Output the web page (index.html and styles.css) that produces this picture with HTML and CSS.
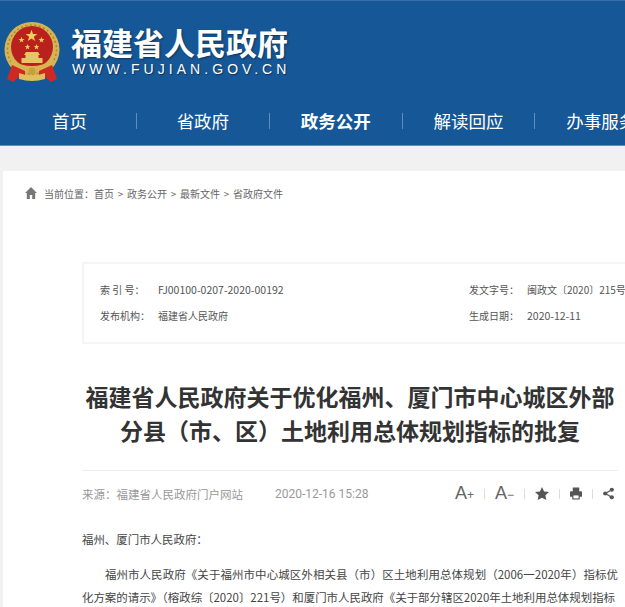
FILE: index.html

```html
<!DOCTYPE html>
<html lang="zh-CN">
<head>
  <meta charset="UTF-8" />
  <meta name="viewport" content="width=device-width, initial-scale=1.0" />
  <title>福建省人民政府关于优化福州、厦门市中心城区外部分县（市、区）土地利用总体规划指标的批复</title>
  <link rel="stylesheet" href="styles.css">
</head>
<body>
  <header class="site-header">
    <div class="brand">
      <svg class="emblem" width="56" height="61" viewBox="0 0 56 61">
        <defs>
          <polygon id="star" points="0,-1 0.24,-0.31 0.95,-0.31 0.38,0.12 0.59,0.81 0,0.4 -0.59,0.81 -0.38,0.12 -0.95,-0.31 -0.24,-0.31" fill="#f0cf58"/>
        </defs>
        <circle cx="28" cy="27.5" r="27.5" fill="#d6b456"/>
        <circle cx="28" cy="27.5" r="24.5" fill="none" stroke="#a98428" stroke-width="1.4" stroke-dasharray="2 2.5"/>
        <circle cx="28" cy="25" r="21" fill="#b8211c"/>
        <use href="#star" transform="translate(27.5 14) scale(6.2)"/>
        <use href="#star" transform="translate(17.5 18) scale(3.2)"/>
        <use href="#star" transform="translate(37.5 18) scale(3.2)"/>
        <use href="#star" transform="translate(23.5 25) scale(3)"/>
        <use href="#star" transform="translate(32.5 25) scale(3)"/>
        <path d="M22 30 H34 L36 33 H34.5 V36 H38.5 V41 H17.5 V36 H21.5 V33 H20 Z" fill="#e6c566"/>
        <path d="M7 38 Q28 50 49 38 L50 43 Q28 56 6 43 Z" fill="#d9b552"/>
        <path d="M8 43 L3 57 L9 60 L16 54 L21 55 L21 49 Z" fill="#cf2a22"/>
        <path d="M48 43 L53 57 L47 60 L40 54 L35 55 L35 49 Z" fill="#cf2a22"/>
        <path d="M15 51 Q28 56 41 51 L41 57 Q28 61 15 57 Z" fill="#e2bf5c"/>
        <circle cx="28" cy="49" r="3.6" fill="#c79f3e"/>
      </svg>
      <div class="brand-text">
        <div class="brand-name">福建省人民政府</div>
        <div class="brand-url">WWW.FUJIAN.GOV.CN</div>
      </div>
    </div>
    <nav class="main-nav">
      <a href="#">首页</a>
      <a href="#">省政府</a>
      <a href="#" class="active">政务公开</a>
      <a href="#">解读回应</a>
      <a href="#">办事服务</a>
    </nav>
  </header>

  <div class="page">
    <div class="crumbs">
      <svg width="12" height="12" viewBox="0 0 12 12"><path d="M6 0 L12 6 H10.2 V12 H7.2 V8 H4.8 V12 H1.8 V6 H0 Z" fill="#777"/></svg>
      <span>当前位置：首页 &gt; 政务公开 &gt; 最新文件 &gt; 省政府文件</span>
    </div>

    <div class="meta">
      <div class="meta-col">
        <div class="meta-row"><span class="meta-label spaced">索 引 号：</span><span class="meta-num">FJ00100-0207-2020-00192</span></div>
        <div class="meta-row"><span class="meta-label">发布机构：</span><span>福建省人民政府</span></div>
      </div>
      <div class="meta-col">
        <div class="meta-row"><span class="meta-label">发文字号：</span><span class="nowrap">闽政文〔2020〕215号</span></div>
        <div class="meta-row"><span class="meta-label">生成日期：</span><span class="meta-num">2020-12-11</span></div>
      </div>
    </div>

    <article class="article">
      <h1>福建省人民政府关于优化福州、厦门市中心城区外部分县（市、区）土地利用总体规划指标的批复</h1>
      <div class="info">
        <span class="source">来源：福建省人民政府门户网站</span>
        <span class="date">2020-12-16 15:28</span>
        <div class="tools">
          <span class="tool-text">A<small>+</small></span>
          <i class="sep"></i>
          <span class="tool-text">A<small>−</small></span>
          <i class="sep"></i>
          <svg width="14" height="13" viewBox="0 0 14 13"><path d="M7 0 L9.1 4.4 L14 5 L10.4 8.3 L11.3 13 L7 10.7 L2.7 13 L3.6 8.3 L0 5 L4.9 4.4 Z" fill="#555"/></svg>
          <i class="sep"></i>
          <svg width="12" height="13" viewBox="0 0 13 13"><path d="M3 0 H10 V4 H12 Q13 4 13 5 V10 H10.5 V13 H2.5 V10 H0 V5 Q0 4 1 4 H3 Z" fill="#555"/><path d="M3.7 8.6 H9.3 V11.8 H3.7 Z" fill="#fff"/></svg>
          <i class="sep"></i>
          <svg width="11" height="13" viewBox="0 0 12 13"><path d="M9.5 2.5 L2.5 6.5 L9.5 10.5" stroke="#555" stroke-width="1.3" fill="none"/><circle cx="9.6" cy="2.4" r="2.3" fill="#555"/><circle cx="2.4" cy="6.5" r="2.3" fill="#555"/><circle cx="9.6" cy="10.6" r="2.3" fill="#555"/></svg>
        </div>
      </div>
      <div class="content">
        <p class="salute">福州、厦门市人民政府：</p>
        <p class="indent">福州市人民政府《关于福州市中心城区外相关县（市）区土地利用总体规划（2006一2020年）指标优化方案的请示》（榕政综〔2020〕221号）和厦门市人民政府《关于部分辖区2020年土地利用总体规划指标</p>
      </div>
    </article>
  </div>
</body>
</html>
```

FILE: styles.css

```css
html, body {
  height: 100%;
}
body {
  margin: 0;
  overflow: hidden;
  background-color: #f1f1f1;
  font-family: "Noto Sans CJK SC", "Liberation Sans", sans-serif;
  color: #333;
}
a {
  color: inherit;
  text-decoration: none;
}

.site-header {
  height: 144px;
  background-color: #155797;
  border-top: 1px solid #3a6fa8;
  border-bottom: 1px solid #5f8fc0;
  color: white;
}
.brand {
  display: flex;
  height: 85px;
  padding: 21px 0 0 4px;
  box-sizing: border-box;
  gap: 11px;
}
.emblem {
  flex: none;
}
.brand-text {
  margin-top: 2px;
}
.brand-name {
  font-size: 31px;
  line-height: 36px;
  font-weight: 700;
  white-space: nowrap;
  text-shadow: 1px 1px 2px rgba(0,0,0,0.4);
}
.brand-url {
  font-family: "Liberation Sans", sans-serif;
  font-size: 14px;
  line-height: 16px;
  margin-top: 1px;
  margin-left: 1px;
  letter-spacing: 4.05px;
  white-space: nowrap;
  text-shadow: 1px 1px 1px rgba(0,0,0,0.4);
}
.main-nav {
  display: flex;
  width: 800px;
  margin-top: 27px;
  margin-left: 3.2px;
}
.main-nav a {
  flex: 0 0 132.8px;
  text-align: center;
  font-size: 17.5px;
  line-height: 16px;
  border-left: 1px solid #5f8cbc;
  box-sizing: border-box;
}
.main-nav a:first-child {
  border-left: none;
}
.main-nav a.active {
  font-weight: 700;
}

.page {
  margin: 25px 0 0 3px;
  height: 440px;
  overflow: hidden;
  background: white;
}
.crumbs {
  display: flex;
  align-items: center;
  gap: 7px;
  padding: 15px 0 0 22px;
  height: 14px;
  font-size: 10px;
  word-spacing: 1.5px;
  color: #666;
}
.meta {
  display: flex;
  width: 600px;
  height: 78px;
  margin: 62px 0 0 79px;
  border: 2px solid #f5f5f5;
  font-size: 10px;
  line-height: 26px;
  color: #555;
}
.meta-col {
  padding: 13px 0 0 16px;
  width: 369px;
  box-sizing: border-box;
}
.meta-col:last-child {
  width: 230px;
}
.meta-row {
  display: flex;
  white-space: nowrap;
}
.meta-label {
  flex: 0 0 58px;
}
.meta-num {
  font-size: 10.5px;
}
.nowrap {
  white-space: nowrap;
}

.article {
  width: 536px;
  margin-left: 79px;
}
h1 {
  margin: 35px 0 0;
  font-size: 23px;
  line-height: 34px;
  font-weight: 700;
  text-align: center;
  color: #333;
}
.info {
  display: flex;
  align-items: center;
  height: 45px;
  margin-top: 23px;
  border-top: 1px solid #eee;
  font-size: 12px;
  color: #999;
}
.source {
  font-size: 11.5px;
  width: 193px;
}
.date {
  font-family: Roboto, sans-serif;
}
.tools {
  display: flex;
  align-items: center;
  margin-left: auto;
  margin-right: 4px;
  gap: 10px;
  color: #666;
}
.tool-text {
  width: 19px;
  font-family: "Liberation Sans", sans-serif;
  font-size: 18px;
  line-height: 18px;
  white-space: nowrap;
}
.tool-text small {
  font-size: 12px;
}
.sep {
  width: 1px;
  height: 10px;
  background-color: #ddd;
}
.content {
  font-size: 11.45px;
  line-height: 23px;
  color: #444;
}
.content p {
  margin: 0;
}
.salute {
  padding-top: 12px;
  padding-bottom: 12px;
}
.indent {
  text-indent: 2em;
  text-align: justify;
}
```
